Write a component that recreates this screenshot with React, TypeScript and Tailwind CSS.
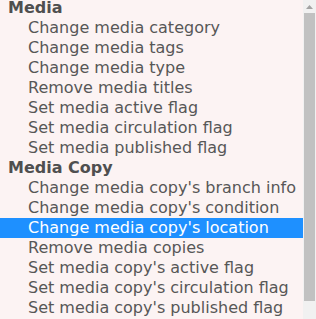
const groups = [
  {
    label: 'Media',
    options: [
      'Change media category',
      'Change media tags',
      'Change media type',
      'Remove media titles',
      'Set media active flag',
      'Set media circulation flag',
      'Set media published flag',
    ],
  },
  {
    label: 'Media Copy',
    options: [
      "Change media copy's branch info",
      "Change media copy's condition",
      "Change media copy's location",
      'Remove media copies',
      "Set media copy's active flag",
      "Set media copy's circulation flag",
      "Set media copy's published flag",
    ],
  },
];

const selected = "Change media copy's location";

export default function App() {
  return (
    <div className="flex h-[319px] w-[316px] overflow-hidden bg-[#fcf3f3] font-['DejaVu_Sans',sans-serif] text-[16px]">
      {/* list */}
      <div className="w-[303px] overflow-hidden">
        <div className="-mt-[2px]">
          {groups.map((g) => (
            <div key={g.label}>
              <div className="h-[20px] pl-[8px] font-bold leading-[20px] text-[#4f4f4f]">{g.label}</div>
              {g.options.map((o) => (
                <div
                  key={o}
                  className={
                    o === selected
                      ? 'h-[20px] whitespace-nowrap bg-[#1e90ff] pl-[28px] leading-[20px] text-white'
                      : 'h-[20px] whitespace-nowrap pl-[28px] leading-[20px] text-[#575757]'
                  }
                >
                  {o}
                </div>
              ))}
            </div>
          ))}
        </div>
      </div>

      {/* scrollbar */}
      <div className="flex w-[13px] flex-col bg-[#f1f1f1]">
        <div className="flex h-[13px] items-center justify-center">
          <svg width="7" height="4" viewBox="0 0 7 4">
            <polygon points="3.5,0 7,4 0,4" fill="#a3a3a3" />
          </svg>
        </div>
        <div className="mx-[1px] h-[288px] bg-[#c1c1c1]" />
      </div>
    </div>
  );
}
